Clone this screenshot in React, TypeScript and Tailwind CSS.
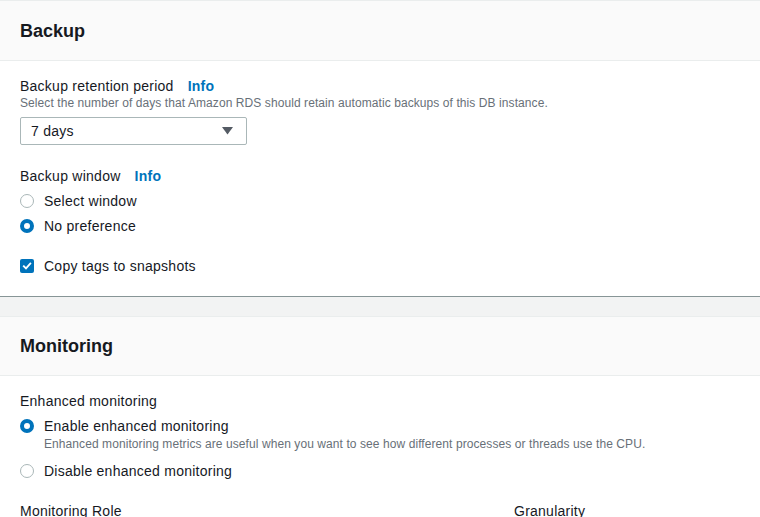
import React from 'react';

function Radio({ checked }: { checked?: boolean }) {
  return checked ? (
    <span className="w-[14px] h-[14px] rounded-full border-[4px] border-[#0073bb] bg-white shrink-0" />
  ) : (
    <span className="w-[14px] h-[14px] rounded-full border-[1.5px] border-[#aab7b8] bg-white shrink-0" />
  );
}

function Checkbox() {
  return (
    <span className="w-[14px] h-[14px] rounded-[2px] bg-[#0073bb] flex items-center justify-center shrink-0">
      <svg width="10" height="10" viewBox="0 0 10 10" fill="none">
        <path d="M1.8 5.2 L4 7.4 L8.3 2.6" stroke="white" strokeWidth="1.8" strokeLinecap="square" />
      </svg>
    </span>
  );
}

function Info() {
  return <span className="font-bold text-[#0073bb] ml-[14px]">Info</span>;
}

function Header({ title, h }: { title: string; h: string }) {
  return (
    <div className={`${h} bg-[#fafafa] border-b border-[#eaeded] flex items-center px-5`}>
      <h2 className="text-[18px] font-bold leading-[22px] tracking-normal text-[#16191f]">{title}</h2>
    </div>
  );
}

export default function App() {
  return (
    <div
      className="w-[760px] h-[517px] overflow-hidden bg-white text-[#16191f] text-[14px] leading-[20px] tracking-[0.25px]"
      style={{ fontFamily: '"Liberation Sans", Arial, sans-serif' }}
    >
      <section className="border-t border-[#eaeded] border-b border-b-[#879596] bg-white">
        <Header title="Backup" h="h-[60px]" />
        <div className="px-5 pt-[15px] pb-[20px]">
          <div className="flex items-center">
            <span>Backup retention period</span>
            <Info />
          </div>
          <p className="text-[12px] leading-[16px] tracking-[0.08px] text-[#687078] -mt-[1px]">
            Select the number of days that Amazon RDS should retain automatic backups of this DB instance.
          </p>
          <div className="mt-[6px] w-[227px] h-[28px] border border-[#aab7b8] rounded-[2px] flex items-center justify-between pl-[10px] pr-[13px]">
            <span>7 days</span>
            <svg width="11" height="8" viewBox="0 0 11 8">
              <path d="M0 0 H11 L5.5 7.5 Z" fill="#545b64" />
            </svg>
          </div>
          <div className="mt-[21px] flex items-center">
            <span>Backup window</span>
            <Info />
          </div>
          <div className="mt-[5px] flex items-center gap-[10px]">
            <Radio />
            <span>Select window</span>
          </div>
          <div className="mt-[5px] flex items-center gap-[10px]">
            <Radio checked />
            <span>No preference</span>
          </div>
          <div className="mt-[20px] flex items-center gap-[10px]">
            <Checkbox />
            <span>Copy tags to snapshots</span>
          </div>
        </div>
      </section>
      <div className="h-[19px] bg-[#f2f3f3]" />
      <section className="border-t border-[#eaeded] bg-white">
        <Header title="Monitoring" h="h-[59px]" />
        <div className="px-5 pt-[15px]">
          <div>Enhanced monitoring</div>
          <div className="mt-[5px] flex items-center gap-[10px]">
            <Radio checked />
            <span>Enable enhanced monitoring</span>
          </div>
          <p className="pl-[24px] text-[12px] leading-[16px] tracking-[0.08px] text-[#687078]">
            Enhanced monitoring metrics are useful when you want to see how different processes or threads use the CPU.
          </p>
          <div className="mt-[9px] flex items-center gap-[10px]">
            <Radio />
            <span>Disable enhanced monitoring</span>
          </div>
          <div className="mt-[20px] grid grid-cols-[494px_1fr]">
            <span>Monitoring Role</span>
            <span>Granularity</span>
          </div>
        </div>
      </section>
    </div>
  );
}
